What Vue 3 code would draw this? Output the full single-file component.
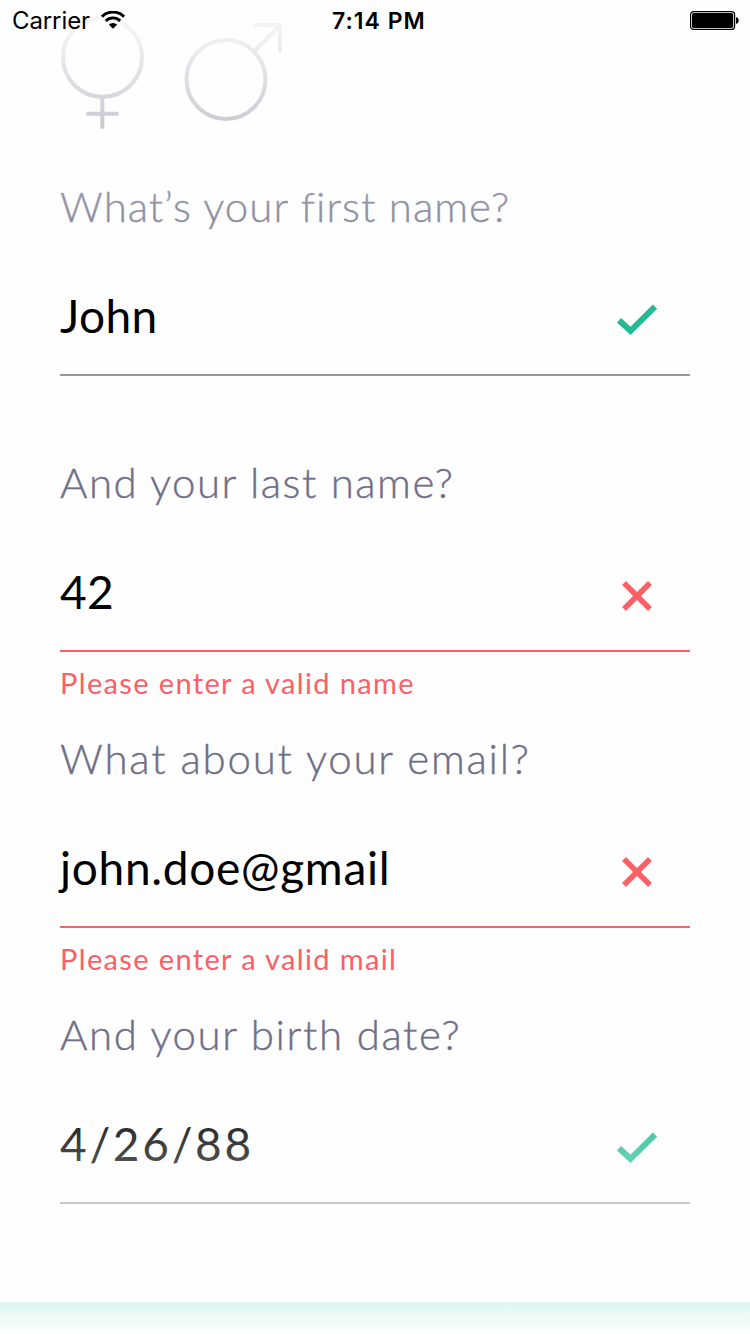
<script setup>
const fields = [
  { label: 'What’s your first name?', value: 'John', valid: true, ls: 1.02, vs: 0.4 },
  { label: 'And your last name?', value: '42', valid: false, error: 'Please enter a valid name', ls: 1.5, vs: 0.3, es: 1.36 },
  { label: 'What about your email?', value: 'john.doe@gmail', valid: false, error: 'Please enter a valid mail', ls: 1.78, vs: 0.7, es: 1.36 },
  { label: 'And your birth date?', value: '4/26/88', valid: true, ls: 1.6, vs: 2.7 },
]
</script>

<template>
  <div class="screen">
    <header class="status">
      <div class="carrier">
        <span>Carrier</span>
        <svg width="24" height="18" viewBox="0 0 24 18" fill="none" stroke="#000">
          <path d="M0.9 5.7A15.7 15.7 0 0 1 23.1 5.7" stroke-width="3" />
          <path d="M4.8 9.9A10.2 10.2 0 0 1 19.2 9.9" stroke-width="2.9" />
          <path d="M12 17.8L7.8 13.6A6 6 0 0 1 16.2 13.6Z" fill="#000" stroke="none" />
        </svg>
      </div>
      <span class="time">7:14 PM</span>
      <svg class="battery" width="50" height="20" viewBox="0 0 50 20">
        <rect x="0.6" y="0.6" width="44" height="17.8" rx="3" fill="none" stroke="#000" stroke-width="1.2" />
        <rect x="2" y="2" width="41.2" height="15" rx="1.8" />
        <path d="M46 6.2C49.6 6.2 49.6 12.8 46 12.8Z" />
      </svg>
    </header>

    <div class="genders">
      <svg width="84" height="120" viewBox="0 0 84 120">
        <circle cx="42.5" cy="47.3" r="39.5" />
        <path d="M42.3 88V117M28 103.7H57" />
      </svg>
      <svg width="100" height="120" viewBox="0 0 100 120">
        <circle cx="42" cy="69.5" r="39.5" />
        <path d="M71 40.5L96 15M71 15H96V40.5" />
      </svg>
    </div>

    <main class="form">
      <section v-for="f in fields" :key="f.label" class="field" :class="{ invalid: !f.valid }">
        <label class="label"><span :style="{ letterSpacing: f.ls + 'px' }">{{ f.label }}</span></label>
        <div class="input">
          <span class="value" :style="{ letterSpacing: f.vs + 'px' }">{{ f.value }}</span>
          <svg v-if="f.valid" class="mark" width="42" height="32" viewBox="0 0 42 32">
            <path d="M3 16.2L14.5 26.8L39 2.7" fill="none" stroke="#22bb94" stroke-width="6" />
          </svg>
          <svg v-else class="mark" width="42" height="32" viewBox="0 0 42 32">
            <path d="M10 5L32 27M32 5L10 27" fill="none" stroke="#fa6067" stroke-width="5.6" stroke-linecap="square" />
          </svg>
        </div>
        <p v-if="f.error" class="error"><span :style="{ letterSpacing: f.es + 'px' }">{{ f.error }}</span></p>
      </section>
    </main>
    <div class="strip"></div>
    <div class="fade top"></div>
    <div class="fade bottom"></div>
  </div>
</template>

<style>
body { background: #fefefe; }
</style>
<style scoped>
.screen {
  position: relative;
  width: 750px;
  height: 1334px;
  overflow: hidden;
  background: #fefefe;
  display: flex;
  flex-direction: column;
  font-family: Lato, "Open Sans", sans-serif;
}
.status {
  position: absolute;
  z-index: 2;
  inset: 0 0 auto;
  height: 42px;
  padding: 0 10px 0 12px;
  box-sizing: border-box;
  display: flex;
  align-items: center;
  justify-content: space-between;
  font: 24px/42px Inter, sans-serif;
}
.carrier { display: flex; align-items: center; gap: 11px; letter-spacing: -0.1px; }
.carrier svg { margin-top: -2px; }
.time { position: absolute; left: 332px; font-weight: 600; font-size: 23px; letter-spacing: 1px; white-space: nowrap; }
.battery { margin-top: -1px; }
.genders {
  height: 158px;
  padding: 10px 60px 0;
  box-sizing: border-box;
  display: flex;
  gap: 40px;
}
.genders svg { fill: none; stroke: #8a8a9c; stroke-width: 4; stroke-linecap: round; stroke-linejoin: round; overflow: visible; }
.form { padding: 10px 60px 0; flex: 1; }
.field { height: 276px; padding-top: 8px; box-sizing: border-box; }
.label {
  display: block;
  height: 60px;
  font-size: 42px;
  line-height: 60px;
  font-weight: 300;
  color: #6f6f87;
  -webkit-text-stroke: 0.4px #6f6f87;
  white-space: nowrap;
}
.input {
  height: 140px;
  padding: 16px 32px 0 0;
  box-sizing: border-box;
  border-bottom: 2px solid #999;
  display: flex;
  justify-content: space-between;
}
.invalid .input { border-color: #fa6067; }
.value { height: 122px; font-size: 46px; line-height: 127px; color: #000; white-space: nowrap; }
.mark { margin-top: 52px; }
.error { margin: 0; height: 60px; font-size: 29px; line-height: 61px; color: #fa6067; white-space: nowrap; }
.strip { height: 32px; background: linear-gradient(#dcf6f1, #fefefe); }
.fade { position: absolute; left: 0; right: 0; pointer-events: none; }
.fade.top { top: 0; height: 290px; background: linear-gradient(rgba(254, 254, 254, .95), rgba(254, 254, 254, .88) 40px, rgba(254, 254, 254, .3) 190px, rgba(254, 254, 254, 0)); }
.fade.bottom { top: 1085px; height: 217px; background: linear-gradient(rgba(254, 254, 254, 0), rgba(254, 254, 254, .87)); }
</style>
